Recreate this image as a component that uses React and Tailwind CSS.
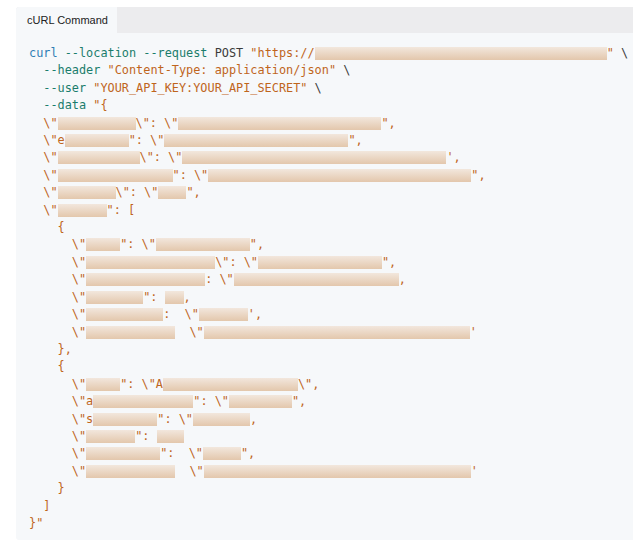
import React from 'react';

// token kinds: c = command, f = flag, p = plain, s = string, b = redacted block (width px)
const lines = [
  [['c', 'curl'], ['p', ' '], ['f', '--location'], ['p', ' '], ['f', '--request'], ['p', ' POST '], ['s', '"https://'], ['b', 292], ['s', '"'], ['p', ' \\']],
  [['p', '  '], ['f', '--header'], ['p', ' '], ['s', '"Content-Type: application/json"'], ['p', ' \\']],
  [['p', '  '], ['f', '--user'], ['p', ' '], ['s', '"YOUR_API_KEY:YOUR_API_SECRET"'], ['p', ' \\']],
  [['p', '  '], ['f', '--data'], ['p', ' '], ['s', '"{']],
  [['s', '  \\"'], ['b', 78], ['s', '\\": \\"'], ['b', 203], ['s', '",']],
  [['s', '  \\"e'], ['b', 64], ['s', '": \\"'], ['b', 184], ['s', '",']],
  [['s', '  \\"'], ['b', 82], ['s', '\\": \\"'], ['b', 264], ['s', "',"]],
  [['s', '  \\"'], ['b', 115], ['s', '": \\"'], ['b', 263], ['s', '",']],
  [['s', '  \\"'], ['b', 58], ['s', '\\": \\"'], ['b', 28], ['s', '",']],
  [['s', '  \\"'], ['b', 49], ['s', '": [']],
  [['s', '    {']],
  [['s', '      \\"'], ['b', 34], ['s', '": \\"'], ['b', 94], ['s', '",']],
  [['s', '      \\"'], ['b', 129], ['s', '\\": \\"'], ['b', 124], ['s', '",']],
  [['s', '      \\"'], ['b', 119], ['s', ': \\"'], ['b', 165], ['s', ',']],
  [['s', '      \\"'], ['b', 57], ['s', '": '], ['b', 19], ['s', ',']],
  [['s', '      \\"'], ['b', 77], ['s', ':  \\"'], ['b', 49], ['s', "',"]],
  [['s', '      \\"'], ['b', 89], ['s', '  \\"'], ['b', 266], ['s', "'"]],
  [['s', '    },']],
  [['s', '    {']],
  [['s', '      \\"'], ['b', 34], ['s', '": \\"A'], ['b', 135], ['s', '\\",']],
  [['s', '      \\"a'], ['b', 100], ['s', '": \\"'], ['b', 63], ['s', '",']],
  [['s', '      \\"s'], ['b', 64], ['s', '": \\"'], ['b', 57], ['s', ',']],
  [['s', '      \\"'], ['b', 49], ['s', '": '], ['b', 27]],
  [['s', '      \\"'], ['b', 74], ['s', '":  \\"'], ['b', 38], ['s', '",']],
  [['s', '      \\"'], ['b', 89], ['s', '  \\"'], ['b', 267], ['s', "'"]],
  [['s', '    }']],
  [['s', '  ]']],
  [['s', '}"']],
];

const tokenClass = {
  c: 'text-[#2f7cb4]',
  f: 'text-[#1b7d6c]',
  p: 'text-[#3b3b3b]',
  s: 'text-[#bf651c]',
};

const Token = ({ kind, value }) => {
  if (kind === 'b') {
    return (
      <span
        className="inline-block h-[13px] align-middle bg-gradient-to-b from-[#f2e7dd] to-[#e3c7ac]"
        style={{ width: value }}
      />
    );
  }
  return <span className={tokenClass[kind]}>{value}</span>;
};

export default function App() {
  return (
    <div className="min-h-[557px] bg-white pt-[7px] pl-4">
      <div className="bg-[#f6f8fa] rounded-l-[3px] overflow-hidden">
        {/* tab bar */}
        <div className="flex h-[26px] bg-[#ececee]">
          <div className="flex items-center w-[101px] pl-[11px] bg-[#f6f8fa] text-[11px] text-[#222] font-['Liberation_Sans',Arial,sans-serif]">
            cURL Command
          </div>
        </div>

        {/* code */}
        <pre className="pt-[12px] pb-[8px] pl-[13px] text-[11.86px] leading-[17.4px] font-['DejaVu_Sans_Mono','Liberation_Mono',monospace]">
          {lines.map((line, i) => (
            <div key={i} className="whitespace-pre">
              {line.map(([kind, value], j) => (
                <Token key={j} kind={kind} value={value} />
              ))}
            </div>
          ))}
        </pre>
      </div>
    </div>
  );
}
